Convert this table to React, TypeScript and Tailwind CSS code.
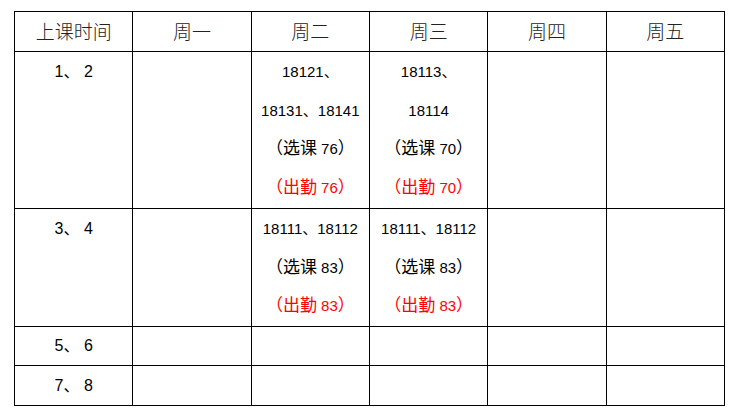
const days = ['周一', '周二', '周三', '周四', '周五'];

type Cell = { lines: string[]; red?: string } | null;

const rows: { time: string; h: string; pad: string; cells: Cell[] }[] = [
  {
    time: '1、 2',
    h: 'h-[157px]',
    pad: 'pt-px align-top leading-[38.5px]',
    cells: [
      null,
      { lines: ['18121、', '18131、18141', '（选课 76）'], red: '（出勤 76）' },
      { lines: ['18113、', '18114', '（选课 70）'], red: '（出勤 70）' },
      null,
      null,
    ],
  },
  {
    time: '3、 4',
    h: 'h-[118px]',
    pad: 'pt-px align-top leading-[38.5px]',
    cells: [
      null,
      { lines: ['18111、18112', '（选课 83）'], red: '（出勤 83）' },
      { lines: ['18111、18112', '（选课 83）'], red: '（出勤 83）' },
      null,
      null,
    ],
  },
  { time: '5、 6', h: 'h-[39px]', pad: 'align-middle leading-[30px]', cells: [null, null, null, null, null] },
  { time: '7、 8', h: 'h-[40px]', pad: 'align-middle leading-[30px]', cells: [null, null, null, null, null] },
];

// bigger glyphs for the Chinese words and full-width brackets, digits stay smaller
function Mixed({ text }: { text: string }) {
  const parts = text.split(/([\u4e00-\u9fff\uff08\uff09]+)/);
  return (
    <>
      {parts.map((p, i) =>
        /[\u4e00-\u9fff\uff08\uff09]/.test(p) ? (
          <span key={i} className="text-[17px]">
            {p}
          </span>
        ) : (
          <span key={i}>{p}</span>
        )
      )}
    </>
  );
}

export default function App() {
  return (
    <div className="w-[739px] h-[417px] bg-white pt-[11px] pl-[14px]">
      <table className="w-[711px] table-fixed border-collapse border border-black font-['Liberation_Sans','Noto_Sans_CJK_SC',sans-serif] text-[15px] text-black">
        <thead>
          <tr className="h-[40px]">
            <th className="border border-black p-0 text-[19px] font-light text-[#222] font-['Noto_Sans_CJK_SC',serif]">
              上课时间
            </th>
            {days.map((d) => (
              <th
                key={d}
                className="border border-black p-0 text-[19px] font-light text-[#222] font-['Noto_Sans_CJK_SC',serif]"
              >
                {d}
              </th>
            ))}
          </tr>
        </thead>
        <tbody>
          {rows.map((r) => (
            <tr key={r.time} className={r.h}>
              <td className={`border border-black p-0 ${r.pad} text-center text-[16px]`}>
                {r.time}
              </td>
              {r.cells.map((c, i) => (
                <td key={i} className={`border border-black p-0 ${r.pad} text-center`}>
                  {c && (
                    <>
                      {c.lines.map((l) => (
                        <div key={l}>
                          <Mixed text={l} />
                        </div>
                      ))}
                      <div className="text-[#ff0000]">
                        <Mixed text={c.red ?? ''} />
                      </div>
                    </>
                  )}
                </td>
              ))}
            </tr>
          ))}
        </tbody>
      </table>
    </div>
  );
}
